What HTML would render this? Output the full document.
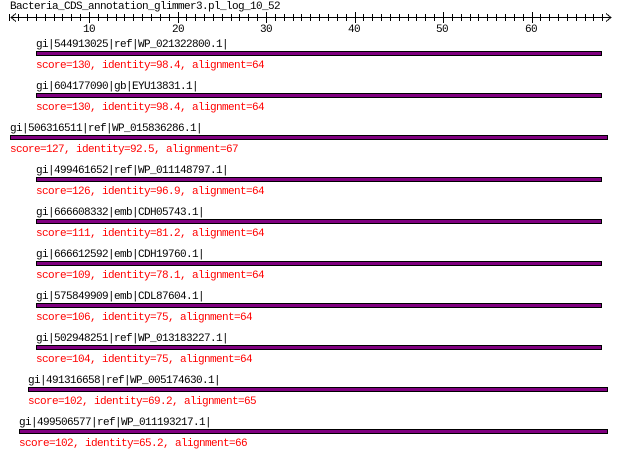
<!DOCTYPE html>
<html><head><style>
body{margin:0;background:#fff;width:620px;height:461px;overflow:hidden;position:relative;font-family:"Liberation Mono",monospace;font-size:11px;letter-spacing:-0.6px;}
.t{position:absolute;white-space:pre;line-height:12px;}
.r{color:#f00;}
.b{position:absolute;height:3px;background:#800080;border:1px solid #000;}
</style></head><body>
<div class="t" style="left:10px;top:1px">Bacteria_CDS_annotation_glimmer3.pl_log_10_52</div>
<svg style="position:absolute;left:0;top:0" width="620" height="40">
<g stroke="#000" stroke-width="1" fill="none" shape-rendering="crispEdges">
<line x1="11" y1="17.5" x2="611" y2="17.5"/>
<polyline points="16,13.5 11,17.5 16,21.5"/>
<polyline points="606,13.5 611,17.5 606,21.5"/>
</g>
<g stroke="#000" shape-rendering="crispEdges" id="ticks"></g>
<g font-family="Liberation Mono, monospace" font-size="11" letter-spacing="-0.6" text-anchor="middle">
<text x="89" y="32">10</text><text x="178" y="32">20</text><text x="266" y="32">30</text><text x="354" y="32">40</text><text x="442" y="32">50</text><text x="531" y="32">60</text>
</g>
</svg>
<script>
var g=document.getElementById('ticks'),s='';
for(var i=1;i<=68;i++){var x=Math.round(0.5+8.85*i)+0.5;var big=i%10==0;s+='<line x1="'+x+'" x2="'+x+'" y1="'+(big?12:14)+'" y2="'+(big?23:21)+'"/>';}
g.innerHTML=s;
</script>
<div class="t" style="left:36px;top:39px">gi|544913025|ref|WP_021322800.1|</div>
<div class="b" style="left:36px;top:51px;width:564px"></div>
<div class="t r" style="left:36px;top:60px">score=130, identity=98.4, alignment=64</div>

<div class="t" style="left:36px;top:81px">gi|604177090|gb|EYU13831.1|</div>
<div class="b" style="left:36px;top:93px;width:564px"></div>
<div class="t r" style="left:36px;top:102px">score=130, identity=98.4, alignment=64</div>

<div class="t" style="left:10px;top:123px">gi|506316511|ref|WP_015836286.1|</div>
<div class="b" style="left:10px;top:135px;width:596px"></div>
<div class="t r" style="left:10px;top:144px">score=127, identity=92.5, alignment=67</div>

<div class="t" style="left:36px;top:165px">gi|499461652|ref|WP_011148797.1|</div>
<div class="b" style="left:36px;top:177px;width:564px"></div>
<div class="t r" style="left:36px;top:186px">score=126, identity=96.9, alignment=64</div>

<div class="t" style="left:36px;top:207px">gi|666608332|emb|CDH05743.1|</div>
<div class="b" style="left:36px;top:219px;width:564px"></div>
<div class="t r" style="left:36px;top:228px">score=111, identity=81.2, alignment=64</div>

<div class="t" style="left:36px;top:249px">gi|666612592|emb|CDH19760.1|</div>
<div class="b" style="left:36px;top:261px;width:564px"></div>
<div class="t r" style="left:36px;top:270px">score=109, identity=78.1, alignment=64</div>

<div class="t" style="left:36px;top:291px">gi|575849909|emb|CDL87604.1|</div>
<div class="b" style="left:36px;top:303px;width:564px"></div>
<div class="t r" style="left:36px;top:312px">score=106, identity=75, alignment=64</div>

<div class="t" style="left:36px;top:333px">gi|502948251|ref|WP_013183227.1|</div>
<div class="b" style="left:36px;top:345px;width:564px"></div>
<div class="t r" style="left:36px;top:354px">score=104, identity=75, alignment=64</div>

<div class="t" style="left:28px;top:375px">gi|491316658|ref|WP_005174630.1|</div>
<div class="b" style="left:28px;top:387px;width:578px"></div>
<div class="t r" style="left:28px;top:396px">score=102, identity=69.2, alignment=65</div>

<div class="t" style="left:19px;top:417px">gi|499506577|ref|WP_011193217.1|</div>
<div class="b" style="left:19px;top:429px;width:587px"></div>
<div class="t r" style="left:19px;top:438px">score=102, identity=65.2, alignment=66</div>
</body></html>
